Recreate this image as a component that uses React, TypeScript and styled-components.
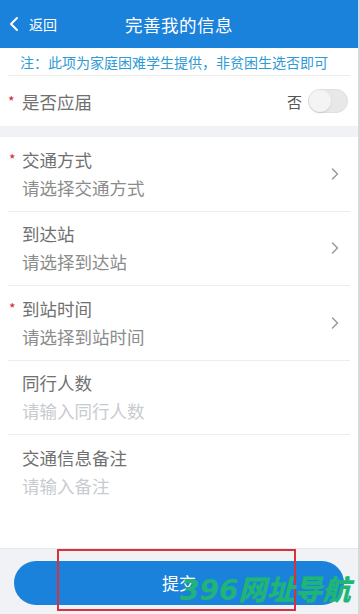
import styled, { createGlobalStyle } from "styled-components";

const GlobalStyle = createGlobalStyle`
  html, body {
    margin: 0;
    padding: 0;
    background: #f0f2f5;
    font-family: "Noto Sans CJK SC", "Noto Sans", sans-serif;
  }
  * { box-sizing: border-box; }
`;

interface FieldItem {
  label: string;
  placeholder: string;
  required?: boolean;
  select?: boolean;
}

const fields: FieldItem[] = [
  { label: "交通方式", placeholder: "请选择交通方式", required: true, select: true },
  { label: "到达站", placeholder: "请选择到达站", select: true },
  { label: "到站时间", placeholder: "请选择到站时间", required: true, select: true },
  { label: "同行人数", placeholder: "请输入同行人数" },
  { label: "交通信息备注", placeholder: "请输入备注" },
];

function Chevron({ size = 14, color = "#9a9a9a" }: { size?: number; color?: string }) {
  return (
    <svg width={size} height={size} viewBox="0 0 14 14" fill="none">
      <path d="M4.5 2 L9.5 7 L4.5 12" stroke={color} strokeWidth="1.5" strokeLinecap="round" strokeLinejoin="round" />
    </svg>
  );
}

export default function App() {
  return (
    <Page>
      <GlobalStyle />
      <Header>
        <Back>
          <BackArrow width="12" height="16" viewBox="0 0 12 16" fill="none">
            <path d="M9 2 L3 8 L9 14" stroke="#fff" strokeWidth="2" strokeLinecap="round" strokeLinejoin="round" />
          </BackArrow>
          返回
        </Back>
        <Title>完善我的信息</Title>
      </Header>

      <Card>
        <Note>注：此项为家庭困难学生提供，非贫困生选否即可</Note>
        <SwitchRow>
          <InlineLabel>
            <Star>*</Star>是否应届
          </InlineLabel>
          <SwitchValue>
            否
            <Toggle>
              <Knob />
            </Toggle>
          </SwitchValue>
        </SwitchRow>
      </Card>

      <Form>
        {fields.map((f, i) => (
          <FieldRow key={f.label} $last={i === fields.length - 1}>
            <FieldText>
              <Label>
                {f.required && <Star>*</Star>}
                {f.label}
              </Label>
              <Placeholder $select={!!f.select}>{f.placeholder}</Placeholder>
            </FieldText>
            {f.select && (
              <ChevronBox>
                <Chevron />
              </ChevronBox>
            )}
          </FieldRow>
        ))}
      </Form>

      <Footer>
        <SubmitButton>提交</SubmitButton>
        <Highlight />
        <Watermark>396网址导航</Watermark>
      </Footer>
    </Page>
  );
}

const Page = styled.div`
  width: 360px;
  height: 614px;
  display: flex;
  flex-direction: column;
  background: #f0f2f5;
  overflow: hidden;
  position: relative;
  border-right: 2px solid #d6d8dc;
`;

const Header = styled.div`
  height: 48px;
  flex-shrink: 0;
  background: #1b82dc;
  display: flex;
  align-items: center;
  justify-content: center;
  position: relative;
  color: #fff;
`;

const Back = styled.div`
  position: absolute;
  left: 8px;
  top: 0;
  height: 48px;
  display: flex;
  align-items: center;
  gap: 9px;
  font-size: 14px;
`;

const BackArrow = styled.svg`
  display: block;
`;

const Title = styled.div`
  font-size: 17.5px;
  letter-spacing: 0.5px;
`;

const Card = styled.div`
  background: #fff;
  margin-bottom: 11px;
`;

const Note = styled.div`
  margin: 0 8px;
  height: 28px;
  padding-left: 12px;
  display: flex;
  align-items: center;
  font-size: 14px;
  color: #2e9ad6;
  border-bottom: 1px solid #ececec;
`;

const SwitchRow = styled.div`
  height: 50px;
  display: flex;
  align-items: center;
  justify-content: space-between;
  padding: 0 10px 0 8px;
`;

const InlineLabel = styled.div`
  display: flex;
  align-items: center;
  font-size: 17.5px;
  color: #707070;
`;

const Star = styled.span`
  color: #d6242e;
  font-size: 14px;
  width: 14px;
  display: inline-block;
`;

const SwitchValue = styled.div`
  display: flex;
  align-items: center;
  gap: 6px;
  font-size: 15px;
  color: #555;
`;

const Toggle = styled.div`
  width: 40px;
  height: 24px;
  border-radius: 12px;
  background: #e8e8e8;
  border: 1px solid #e0e0e0;
  position: relative;
`;

const Knob = styled.div`
  position: absolute;
  left: 0;
  top: 0;
  width: 22px;
  height: 22px;
  border-radius: 50%;
  background: #f4f4f4;
  box-shadow: 0 1px 2px rgba(0, 0, 0, 0.12);
`;

const Form = styled.div`
  background: #fff;
  flex: 1;
  display: flex;
  flex-direction: column;
`;

const FieldRow = styled.div<{ $last: boolean }>`
  margin: 0 8px;
  height: 74.5px;
  display: flex;
  align-items: center;
  justify-content: space-between;
  border-bottom: ${(p) => (p.$last ? "none" : "1px solid #ececec")};
`;

const FieldText = styled.div`
  display: flex;
  flex-direction: column;
  gap: 6px;
`;

const Label = styled.div`
  font-size: 17.5px;
  line-height: 22px;
  color: #707070;
  padding-left: 14px;
  position: relative;

  & > span {
    position: absolute;
    left: 1px;
    top: -1px;
  }
`;

const Placeholder = styled.div<{ $select: boolean }>`
  font-size: 17.5px;
  line-height: 22px;
  padding-left: 14px;
  color: ${(p) => (p.$select ? "#8c8c8c" : "#c8cbd0")};
`;

const ChevronBox = styled.div`
  width: 16px;
  display: flex;
  align-items: center;
  margin-right: 6px;
`;

const Footer = styled.div`
  height: 66px;
  flex-shrink: 0;
  background: #f0f2f5;
  border-top: 1px solid #e6e8eb;
  display: flex;
  align-items: center;
  justify-content: center;
  padding: 0 14px;
  position: relative;
`;

const SubmitButton = styled.button`
  width: 330px;
  height: 44px;
  margin-top: 2px;
  border: none;
  border-radius: 22px;
  background: #1b82dc;
  color: #fff;
  font-size: 17px;
  font-family: "Noto Sans CJK SC", sans-serif;
`;

const Highlight = styled.div`
  position: absolute;
  left: 57px;
  top: 0;
  width: 239px;
  height: 62px;
  border: 2px solid #d9323e;
  pointer-events: none;
`;

const Watermark = styled.div`
  position: absolute;
  left: 180px;
  top: 27px;
  font-size: 28px;
  line-height: 30px;
  font-weight: 900;
  font-style: italic;
  letter-spacing: 0;
  color: #1fb577;
  white-space: nowrap;
  pointer-events: none;
  font-family: "DejaVu Sans", "Noto Sans CJK SC", sans-serif;
`;
